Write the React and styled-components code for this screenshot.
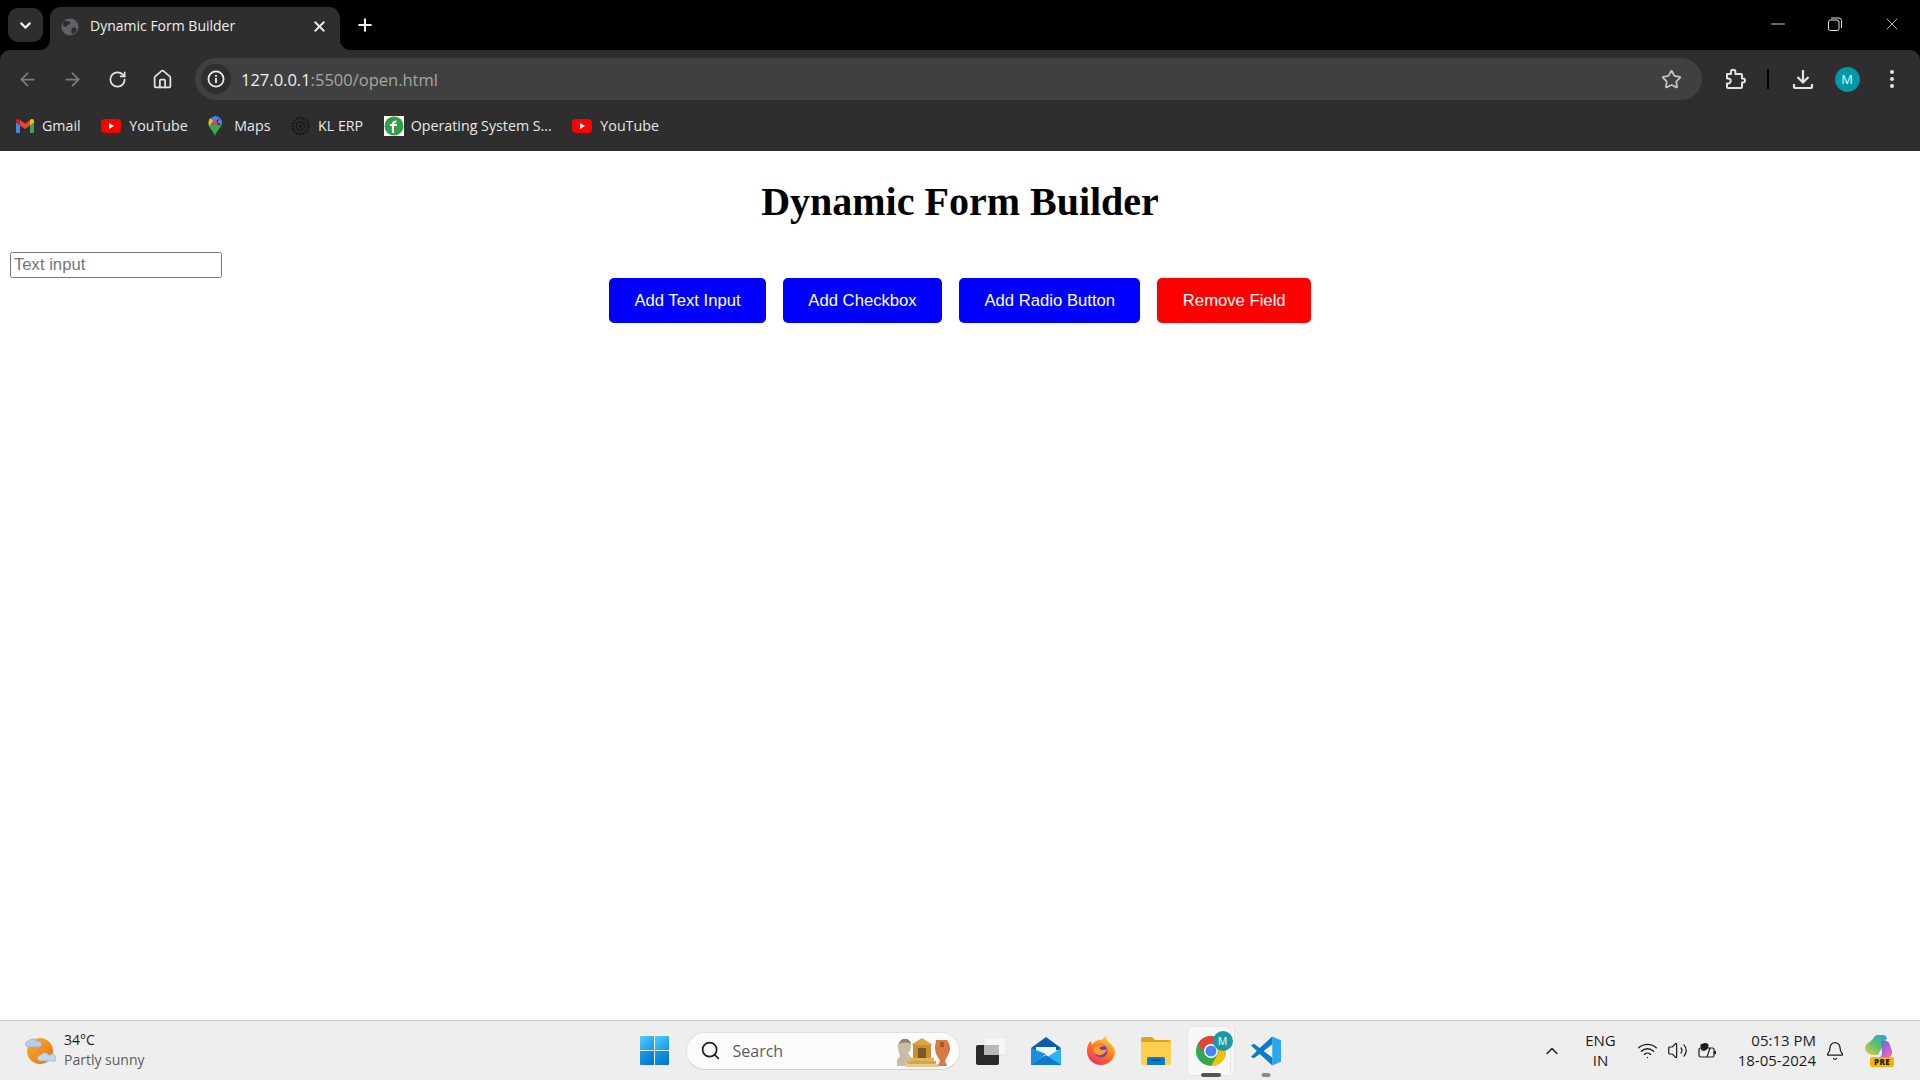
import React from "react";
import styled, { createGlobalStyle } from "styled-components";
import {
  ArrowLeft,
  ArrowRight,
  RotateCw,
  House,
  Star,
  X,
  Plus,
  ChevronDown,
  ChevronUp,
  Minus,
  Wifi,
  Volume2,
  Bell,
  Search,
} from "lucide-react";

const GlobalStyle = createGlobalStyle`
  html, body {
    margin: 0;
    padding: 0;
    background: #ffffff;
  }
  * {
    box-sizing: border-box;
  }
`;

const uiFont = `"Open Sans", "Noto Sans", sans-serif`;

const Screen = styled.div`
  width: 1920px;
  height: 1080px;
  display: flex;
  flex-direction: column;
  overflow: hidden;
  background: #000;
`;

/* tab strip */
const TabStrip = styled.div`
  height: 50px;
  flex: none;
  display: flex;
  align-items: flex-end;
  padding-left: 8px;
  background: #000;
  position: relative;
`;

const TabSearch = styled.div`
  width: 35px;
  height: 34px;
  margin-bottom: 8px;
  border-radius: 10px;
  background: #2e2e2e;
  color: #f0f0f0;
  display: flex;
  align-items: center;
  justify-content: center;
`;

const Tab = styled.div`
  width: 290px;
  height: 43px;
  margin-left: 7px;
  padding: 0 12px 0 11px;
  background: #2e2e2e;
  border-radius: 11px 11px 0 0;
  display: flex;
  align-items: center;
  position: relative;
  color: #eeeeee;
  font: 14px ${uiFont};

  &::before,
  &::after {
    content: "";
    position: absolute;
    bottom: 0;
    width: 11px;
    height: 11px;
  }
  &::before {
    left: -11px;
    background: radial-gradient(circle at 0 0, transparent 11px, #2e2e2e 11.5px);
  }
  &::after {
    right: -11px;
    background: radial-gradient(circle at 100% 0, transparent 11px, #2e2e2e 11.5px);
  }
`;

const TabTitle = styled.span`
  margin-left: 11px;
  flex: 1;
  position: relative;
  top: -3px;
`;

const TabGlyph = styled.span`
  display: flex;
  position: relative;
  top: -2px;
`;

const NewTab = styled.div`
  width: 30px;
  margin-left: 10px;
  margin-bottom: 10px;
  height: 30px;
  color: #f2f2f2;
  display: flex;
  align-items: center;
  justify-content: center;
`;

const WindowControls = styled.div`
  margin-left: auto;
  align-self: flex-start;
  display: flex;
  height: 48px;
  align-items: center;
  color: #e6e6e6;
`;

const WindowButton = styled.div`
  width: 57px;
  display: flex;
  justify-content: center;
  align-items: center;
`;

/* toolbar */
const Toolbar = styled.div`
  height: 56px;
  flex: none;
  background: #2e2e2e;
  border-radius: 10px 10px 0 0;
  display: flex;
  align-items: center;
  padding: 2px 10px 0 9px;
`;

const NavButton = styled.div`
  width: 36px;
  margin-right: ${(p) => p.$gap || 0}px;
  display: flex;
  justify-content: center;
  align-items: center;
  color: ${(p) => (p.$dim ? "#7d7d7d" : "#e3e3e3")};
`;

const Omnibox = styled.div`
  flex: 1;
  height: 42px;
  margin-left: 15px;
  margin-right: 15px;
  border-radius: 21px;
  background: #404040;
  display: flex;
  align-items: center;
  padding: 0 20px 0 6px;
`;

const InfoChip = styled.div`
  width: 30px;
  height: 30px;
  border-radius: 50%;
  background: #2e2e2e;
  display: flex;
  align-items: center;
  justify-content: center;
  flex: none;
`;

const Url = styled.div`
  margin-left: 10px;
  flex: 1;
  font: 16.5px ${uiFont};
  color: #a6a6a6;

  b {
    font-weight: 400;
    color: #f0f0f0;
  }
`;

const Separator = styled.div`
  width: 2px;
  height: 20px;
  margin: 0 16px 0 14px;
  background: #000;
`;

const Avatar = styled.div`
  width: 25px;
  height: 25px;
  border-radius: 50%;
  background: #0097a7;
  color: #e8f7f8;
  font: 13px ${uiFont};
  display: flex;
  align-items: center;
  justify-content: center;
`;

const BookmarkBar = styled.div`
  height: 45px;
  flex: none;
  background: #2e2e2e;
  display: flex;
  align-items: center;
  padding: 0 0 6px 16px;
  gap: 20.5px;
`;

const Bookmark = styled.div`
  display: flex;
  align-items: center;
  gap: ${(p) => p.$gap || 8}px;
  font: 14.25px ${uiFont};
  color: #e8e8e8;
  white-space: nowrap;
`;

/* page content */
const Page = styled.main`
  flex: 1;
  background: #ffffff;
  padding: 28px 10px 0;
`;

const Heading = styled.h1`
  margin: 0;
  text-align: center;
  font: bold 40px/46px "Liberation Serif", "Times New Roman", serif;
  color: #000;
`;

const TextInput = styled.input`
  display: block;
  width: 212px;
  height: 26px;
  margin-top: 27px;
  padding: 1px 3px;
  border: 1.25px solid #767676;
  border-radius: 2.5px;
  font: 16.67px "Liberation Sans", Arial, sans-serif;
  background: #fff;

  &::placeholder {
    color: #757575;
  }
`;

const ButtonRow = styled.div`
  display: flex;
  justify-content: center;
  gap: 17px;
`;

const ActionButton = styled.button`
  height: 45px;
  padding: 0 25.4px;
  border: none;
  border-radius: 5px;
  color: #fff;
  background: ${(p) => (p.$danger ? "#ff0000" : "#0000ff")};
  font: 16.67px "Liberation Sans", Arial, sans-serif;
`;

/* taskbar */
const Taskbar = styled.footer`
  height: 60px;
  flex: none;
  background: #eeeeee;
  border-top: 1px solid #c6c6c6;
  display: grid;
  grid-template-columns: 1fr auto 1fr;
  align-items: center;
`;

const Weather = styled.div`
  display: flex;
  align-items: center;
  padding-left: 24px;
  gap: 8px;
`;

const WeatherText = styled.div`
  font: 14px/20px ${uiFont};
  color: #1a1a1a;
  padding-bottom: 2px;

  span {
    display: block;
    color: #5c5c5c;
  }
`;

const TaskCenter = styled.div`
  display: flex;
  align-items: center;
  width: 643px;
  padding-left: 1px;
`;

const SearchBox = styled.div`
  width: 274px;
  height: 38px;
  margin-left: 17px;
  border-radius: 19px;
  background: #fbfbfb;
  border: 1px solid #e2e2e2;
  border-bottom-color: #cfcfcf;
  display: flex;
  align-items: center;
  padding-left: 13px;
  color: #5c5c5c;
  font: 16px ${uiFont};
  position: relative;
`;

const SearchLabel = styled.span`
  margin-left: 12px;
`;

const SearchArt = styled.svg`
  position: absolute;
  right: 6px;
  top: 3px;
`;

const TaskIcon = styled.div`
  width: 30px;
  height: 30px;
  margin-left: ${(p) => p.$left || 25}px;
  display: flex;
  align-items: center;
  justify-content: center;
  position: relative;
  flex: none;
  isolation: isolate;
`;

const ActiveTile = styled.div`
  position: absolute;
  z-index: -1;
  left: -9px;
  top: -10px;
  width: 44px;
  height: 50px;
  border-radius: 5px;
  background: #f8f8f8;
  border: 1px solid #e4e4e4;
  box-shadow: 4px 0 0 -1px #f6f6f6, 5px 0 0 -1px #e4e4e4;
`;

const Indicator = styled.div`
  position: absolute;
  left: 50%;
  transform: translateX(-50%);
  bottom: -11px;
  height: 4px;
  border-radius: 2px;
  width: ${(p) => p.$w}px;
  background: ${(p) => p.$color};
`;

const ProfileBadge = styled.div`
  position: absolute;
  right: -7px;
  top: -5px;
  width: 20px;
  height: 20px;
  border-radius: 50%;
  background: #1a9aa5;
  color: #cdeef0;
  font: 600 10.5px ${uiFont};
  display: flex;
  align-items: center;
  justify-content: center;
`;

const Tray = styled.div`
  display: flex;
  align-items: center;
  justify-content: flex-end;
  color: #1c1c1c;
  padding-right: 25px;
`;

const TrayIcon = styled.div`
  width: ${(p) => p.$w || 30}px;
  display: flex;
  justify-content: center;
  align-items: center;
  margin-left: ${(p) => p.$left || 0}px;
`;

const TrayText = styled.div`
  font: 15px/20px ${uiFont};
  text-align: ${(p) => p.$align};
  margin-left: ${(p) => p.$left || 0}px;
  padding-bottom: 2px;
  white-space: nowrap;
`;

const Copilot = styled.div`
  width: 30px;
  height: 32px;
  margin-left: 20px;
  position: relative;
`;

const PreBadge = styled.div`
  position: absolute;
  left: 5px;
  bottom: 0;
  width: 24px;
  height: 10px;
  border-radius: 2px;
  background: #f7b500;
  color: #222;
  font: 800 8px/10px ${uiFont};
  text-align: center;
  letter-spacing: 0.4px;
`;

const GlobeIcon = () => (
  <svg width="18" height="18" viewBox="0 0 18 18">
    <circle cx="9" cy="9" r="8.5" fill="#5f6368" />
    <path d="M4 3c2 0 4 0 5 1s-1 3-2 3-1 2-3 2-2-2-2-3 1-3 2-3zM11 10c2-1 4 0 5 1-1 3-3 5-5 5-1-2-1-4 0-6z" fill="#2e2e2e" />
  </svg>
);

const InfoIcon = () => (
  <svg width="18" height="18" viewBox="0 0 18 18" fill="none">
    <circle cx="9" cy="9" r="7.6" stroke="#f0f0f0" strokeWidth="1.7" />
    <rect x="8.1" y="8" width="1.8" height="5" fill="#f0f0f0" />
    <rect x="8.1" y="4.9" width="1.8" height="1.9" fill="#f0f0f0" />
  </svg>
);

const PuzzleIcon = () => (
  <svg width="22" height="22" viewBox="0 0 22 22" fill="none" stroke="#e3e3e3" strokeWidth="2" strokeLinejoin="round">
    <path d="M3 6h4V4a2.2 2.2 0 0 1 4.4 0v2H17a1 1 0 0 1 1 1v3.5h1a2 2 0 0 1 0 4h-1V19a1 1 0 0 1-1 1H4a1 1 0 0 1-1-1v-3.5h1.2a2.5 2.5 0 0 0 0-5H3z" />
  </svg>
);

const DownloadIcon = () => (
  <svg width="22" height="22" viewBox="0 0 22 22" fill="none" stroke="#e3e3e3" strokeWidth="2.2">
    <path d="M11 2v12M5.5 9l5.5 5.5L16.5 9" />
    <path d="M2 16v2.5a1.5 1.5 0 0 0 1.5 1.5h15a1.5 1.5 0 0 0 1.5-1.5V16" />
  </svg>
);

const DotsIcon = () => (
  <svg width="6" height="20" viewBox="0 0 6 20" fill="#e3e3e3">
    <circle cx="3" cy="3" r="2" />
    <circle cx="3" cy="10" r="2" />
    <circle cx="3" cy="17" r="2" />
  </svg>
);

const RestoreIcon = () => (
  <svg width="14" height="14" viewBox="0 0 14 14" fill="none" stroke="#e6e6e6" strokeWidth="1">
    <rect x="0.5" y="3" width="10.5" height="10.5" rx="2" />
    <path d="M3 1h8a2.5 2.5 0 0 1 2.5 2.5V11" />
  </svg>
);

const GmailIcon = () => (
  <svg width="18" height="14" viewBox="0 0 18 14">
    <path d="M0 3v9.8C0 13.5.5 14 1.2 14H4V6z" fill="#4285f4" />
    <path d="M18 3v9.8c0 .7-.5 1.2-1.2 1.2H14V6z" fill="#34a853" />
    <path d="M4 6.5 9 10l5-3.500V1L9 4.700 4 1z" fill="#ea4335" />
    <path d="M14 1v5.500L18 3.500V2c0-1.600-1.800-2.500-3-1.700z" fill="#fbbc04" />
    <path d="M4 1v5.500L0 3.500V2C0 .4 1.800-.5 3 .3z" fill="#c5221f" />
  </svg>
);

const YoutubeIcon = () => (
  <svg width="20" height="14" viewBox="0 0 20 14">
    <rect width="20" height="14" rx="4" fill="#ff0000" />
    <path d="M8 4l5 3-5 3z" fill="#fff" />
  </svg>
);

const MapsIcon = () => (
  <svg width="14" height="20" viewBox="0 0 14 20">
    <path d="M7 0a7 7 0 0 1 5 2L2 9.500A7 7 0 0 1 7 0z" fill="#4285f4" />
    <path d="M12 2a7 7 0 0 1 1.400 7.500L9.500 6z" fill="#4285f4" />
    <path d="M.6 9.500C1.500 12 5.500 15.500 7 20c1.500-4.500 5.500-8 6.400-10.500L9.400 8.500 5 8z" fill="#34a853" />
    <path d="M2.100 2.100 5 5 1 10.300C.3 8 0 5 2.100 2.100z" fill="#fbbc04" />
    <circle cx="7" cy="7" r="2.500" fill="#ea4335" />
  </svg>
);

const ErpIcon = () => (
  <svg width="19" height="20" viewBox="0 0 19 20" fill="none">
    <circle cx="9.500" cy="10" r="8" stroke="#161616" strokeWidth="2.500" strokeDasharray="1.800 1.200" />
    <circle cx="9.500" cy="10" r="5" fill="#1c1c1c" />
    <circle cx="9.500" cy="10" r="2.500" stroke="#3a3a3a" />
  </svg>
);

const OsIcon = () => (
  <svg width="20" height="20" viewBox="0 0 20 20">
    <rect width="20" height="20" fill="#ffffff" />
    <circle cx="10" cy="10" r="9.500" fill="#2f9e44" />
    <path d="M9 17V8.500c0-2 1-3 3.500-3M6 9h7" stroke="#fff" strokeWidth="2.200" fill="none" />
  </svg>
);

const WeatherIcon = () => (
  <svg width="32" height="30" viewBox="0 0 32 30">
    <defs>
      <linearGradient id="sun" x1="0" y1="0" x2="1" y2="1">
        <stop offset="0" stopColor="#f9b72a" />
        <stop offset="1" stopColor="#ea6a12" />
      </linearGradient>
    </defs>
    <circle cx="16" cy="15" r="13" fill="url(#sun)" />
    <path d="M4 11a3 3 0 0 1 1-6 4.500 4.500 0 0 1 8 .5 3 3 0 0 1 3 5.500z" fill="#b7cdec" stroke="#8fb0de" strokeWidth="0.700" />
    <path d="M16 25a3 3 0 0 1 1-6 4.500 4.500 0 0 1 8 .5 3 3 0 0 1 6 5.500z" fill="#c3d6f0" stroke="#8fb0de" strokeWidth="0.700" />
  </svg>
);

const WindowsLogo = () => (
  <svg width="29" height="29" viewBox="0 0 29 29">
    <defs>
      <linearGradient id="winTop" x1="0" y1="0" x2="1" y2="1">
        <stop offset="0" stopColor="#4fd0fb" />
        <stop offset="1" stopColor="#1495e4" />
      </linearGradient>
      <linearGradient id="winBottom" x1="0" y1="0" x2="1" y2="1">
        <stop offset="0" stopColor="#1aa0ea" />
        <stop offset="1" stopColor="#0070cc" />
      </linearGradient>
    </defs>
    <path d="M1 0h13v14H0V1a1 1 0 0 1 1-1z" fill="url(#winTop)" />
    <path d="M15 0h13a1 1 0 0 1 1 1v13H15z" fill="url(#winTop)" />
    <path d="M0 15h14v14H1a1 1 0 0 1-1-1z" fill="url(#winBottom)" />
    <path d="M15 15h14v13a1 1 0 0 1-1 1H15z" fill="url(#winBottom)" />
  </svg>
);

const MuseumArt = () => (
  <SearchArt width="58" height="32" viewBox="0 0 58 32">
    <path d="M3 10c0-4 3-7 7-7s6 3 6 7c0 3-1 6-3 7l3 4v9H2v-6l3-4c-1-3-2-6-2-10z" fill="#c9bda6" />
    <path d="M4 8c1-4 4-6 7-5 2 0 5 2 5 5-3-2-8-2-12 0z" fill="#8c8573" />
    <path d="M27 2 38 9H16z" fill="#d9a441" />
    <rect x="18" y="9" width="18" height="13" fill="#c98f32" />
    <rect x="23" y="12" width="8" height="10" fill="#7a5a24" />
    <rect x="15" y="22" width="24" height="3" fill="#e0b45a" />
    <rect x="13" y="25" width="28" height="3" fill="#d6a64a" />
    <rect x="11" y="28" width="33" height="3" fill="#e8c98a" />
    <path d="M41 4h11c1 2 3 4 3 8 0 6-4 10-5 13l2 5H43l2-5c-1-3-5-7-5-13 0-4 1-6 1-8z" fill="#d87a45" />
    <path d="M45 6h4v5h-4z" fill="#a85a2c" />
  </SearchArt>
);

const TaskViewIcon = () => (
  <svg width="30" height="28" viewBox="0 0 30 28">
    <rect x="8" y="0" width="22" height="18" rx="1.500" fill="#f7f7f7" stroke="#e2e2e2" />
    <rect x="0" y="8" width="23" height="20" rx="2" fill="#2a2a2a" />
    <rect x="8" y="8" width="15" height="10" fill="#b9b9b9" />
  </svg>
);

const MailIcon = () => (
  <svg width="30" height="28" viewBox="0 0 30 28">
    <path d="M0 11 15 0l15 11v2H0z" fill="#0a5fa8" />
    <path d="M5 10h20v5l-10 5-10-5z" fill="#f4f4f4" />
    <path d="M0 11l15 10 15-10v17H0z" fill="#29b6f0" />
    <path d="M0 28 15 17 0 11z" fill="#1a8fdc" />
    <path d="M0 28h30L15 18z" fill="#0f78cf" />
  </svg>
);

const FirefoxIcon = () => (
  <svg width="30" height="30" viewBox="0 0 30 30">
    <defs>
      <linearGradient id="fox" x1="0.800" y1="0" x2="0.200" y2="1">
        <stop offset="0" stopColor="#ffd43a" />
        <stop offset="0.500" stopColor="#ff7a1a" />
        <stop offset="1" stopColor="#f0266a" />
      </linearGradient>
    </defs>
    <path d="M15 29A14 14 0 0 1 1 15C1 10 3 6 5 5l1 4c2-3 6-6 10-5 1-1 2-3 4-4 0 3 1 5 4 7 3 3 5 6 5 9a14 14 0 0 1-14 13z" fill="url(#fox)" />
    <circle cx="15" cy="15" r="6.500" fill="#6b3fc4" />
    <path d="M8 12c3-3 8-4 11-2-3 0-5 1-6 2 2 3 6 2 8 1-1 4-5 7-9 6-3-1-5-4-4-7z" fill="#ff9f2e" />
  </svg>
);

const FolderIcon = () => (
  <svg width="30" height="28" viewBox="0 0 30 28">
    <path d="M0 2a2 2 0 0 1 2-2h9l3 3h14a2 2 0 0 1 2 2v4H0z" fill="#e0a416" />
    <path d="M0 5h30v21a2 2 0 0 1-2 2H2a2 2 0 0 1-2-2z" fill="#fcd04f" />
    <path d="M6 22a2 2 0 0 1 2-2h14a2 2 0 0 1 2 2v6H6z" fill="#0f78cf" />
    <rect x="10" y="22.500" width="10" height="1.500" fill="#0a4f8f" />
  </svg>
);

const ChromeIcon = () => (
  <svg width="30" height="30" viewBox="0 0 30 30">
    <circle cx="15" cy="15" r="15" fill="#34a853" />
    <path d="M15 0a15 15 0 0 1 13 7.500H15a7.500 7.500 0 0 0-6.500 11.250L2 7.500A15 15 0 0 1 15 0z" fill="#ea4335" />
    <path d="M28 7.500A15 15 0 0 1 15 30l6.500-11.250A7.500 7.500 0 0 0 15 7.500z" fill="#fbbc04" />
    <circle cx="15" cy="15" r="7" fill="#fff" />
    <circle cx="15" cy="15" r="5.500" fill="#4285f4" />
  </svg>
);

const VscodeIcon = () => (
  <svg width="31" height="30" viewBox="0 0 31 30">
    <path d="M22 0 31 4v22l-9 4z" fill="#29a8ee" />
    <path d="M22 0 9 12 3 7.500 0 9l6 6-6 6 3 1.500L9 18l13 12z M22 8v14l-9-7z" fill="#0e7ac8" fillRule="evenodd" />
  </svg>
);

const BatteryIcon = () => (
  <svg width="20" height="18" viewBox="0 0 20 18" fill="none" stroke="#1c1c1c" strokeWidth="1.200">
    <rect x="1" y="6" width="15" height="9" rx="1.500" />
    <path d="M17 9v3" strokeWidth="2" />
    <path d="M3 3c3-2 6-2 7 0 0 4-3 6-6 5-1-1-1-3-1-5z" fill="#1c1c1c" />
    <path d="M9 15l3-9" />
  </svg>
);

const CopilotIcon = () => (
  <svg width="28" height="26" viewBox="0 0 28 26">
    <defs>
      <linearGradient id="copA" x1="0" y1="1" x2="1" y2="0">
        <stop offset="0" stopColor="#f6c945" />
        <stop offset="0.500" stopColor="#53c46c" />
        <stop offset="1" stopColor="#2b9de8" />
      </linearGradient>
      <linearGradient id="copB" x1="0" y1="0" x2="1" y2="1">
        <stop offset="0" stopColor="#2a7de1" />
        <stop offset="0.500" stopColor="#b25fd6" />
        <stop offset="1" stopColor="#f27aa6" />
      </linearGradient>
    </defs>
    <path d="M8 4c1-2 2-4 5-4h5c2 0 3 1 4 3l-5 9-4 8H8c-4 0-8-3-8-7 0-2 1-3 2-4z" fill="url(#copA)" />
    <path d="M16 6h5c2 0 3 1 4 4l2 6c1 4-2 7-6 7h-9c2 0 4-1 5-4z" fill="url(#copB)" />
  </svg>
);

const bookmarks = [
  { label: "Gmail", icon: <GmailIcon /> },
  { label: "YouTube", icon: <YoutubeIcon /> },
  { label: "Maps", icon: <MapsIcon />, gap: 12 },
  { label: "KL ERP", icon: <ErpIcon /> },
  { label: "Operating System S...", icon: <OsIcon />, gap: 7 },
  { label: "YouTube", icon: <YoutubeIcon /> },
];

const buttons = [
  { label: "Add Text Input" },
  { label: "Add Checkbox" },
  { label: "Add Radio Button" },
  { label: "Remove Field", danger: true },
];

const App = () => {
  return (
    <Screen>
      <GlobalStyle />
      <TabStrip>
        <TabSearch>
          <ChevronDown size={17} strokeWidth={3} />
        </TabSearch>
        <Tab>
          <TabGlyph>
            <GlobeIcon />
          </TabGlyph>
          <TabTitle>Dynamic Form Builder</TabTitle>
          <TabGlyph>
            <X size={17} strokeWidth={2.5} />
          </TabGlyph>
        </Tab>
        <NewTab>
          <Plus size={20} strokeWidth={2.5} />
        </NewTab>
        <WindowControls>
          <WindowButton>
            <Minus size={22} strokeWidth={1} />
          </WindowButton>
          <WindowButton>
            <RestoreIcon />
          </WindowButton>
          <WindowButton>
            <X size={20} strokeWidth={1} />
          </WindowButton>
        </WindowControls>
      </TabStrip>

      <Toolbar>
        <NavButton $dim $gap={9}>
          <ArrowLeft size={21} strokeWidth={2} />
        </NavButton>
        <NavButton $dim $gap={9}>
          <ArrowRight size={21} strokeWidth={2} />
        </NavButton>
        <NavButton $gap={9}>
          <RotateCw size={19} strokeWidth={2.2} />
        </NavButton>
        <NavButton>
          <House size={21} strokeWidth={2} />
        </NavButton>
        <Omnibox>
          <InfoChip>
            <InfoIcon />
          </InfoChip>
          <Url>
            <b>127.0.0.1</b>:5500/open.html
          </Url>
          <Star size={21} strokeWidth={2} color="#c4c4c4" />
        </Omnibox>
        <NavButton>
          <PuzzleIcon />
        </NavButton>
        <Separator />
        <NavButton $gap={8}>
          <DownloadIcon />
        </NavButton>
        <NavButton $gap={9}>
          <Avatar>M</Avatar>
        </NavButton>
        <NavButton>
          <DotsIcon />
        </NavButton>
      </Toolbar>

      <BookmarkBar>
        {bookmarks.map((b, i) => (
          <Bookmark key={i} $gap={b.gap}>
            {b.icon}
            {b.label}
          </Bookmark>
        ))}
      </BookmarkBar>

      <Page>
        <Heading>Dynamic Form Builder</Heading>
        <TextInput type="text" placeholder="Text input" />
        <ButtonRow>
          {buttons.map((b) => (
            <ActionButton key={b.label} $danger={b.danger}>
              {b.label}
            </ActionButton>
          ))}
        </ButtonRow>
      </Page>

      <Taskbar>
        <Weather>
          <WeatherIcon />
          <WeatherText>
            34°C
            <span>Partly sunny</span>
          </WeatherText>
        </Weather>
        <TaskCenter>
          <WindowsLogo />
          <SearchBox>
            <Search size={21} strokeWidth={2} color="#222" />
            <SearchLabel>Search</SearchLabel>
            <MuseumArt />
          </SearchBox>
          <TaskIcon $left={16}>
            <TaskViewIcon />
          </TaskIcon>
          <TaskIcon>
            <MailIcon />
          </TaskIcon>
          <TaskIcon>
            <FirefoxIcon />
          </TaskIcon>
          <TaskIcon>
            <FolderIcon />
          </TaskIcon>
          <TaskIcon>
            <ActiveTile />
            <ChromeIcon />
            <ProfileBadge>M</ProfileBadge>
            <Indicator $w={20} $color="#555555" />
          </TaskIcon>
          <TaskIcon>
            <VscodeIcon />
            <Indicator $w={9} $color="#8a8a8a" />
          </TaskIcon>
        </TaskCenter>
        <Tray>
          <TrayIcon $w={20}>
            <ChevronUp size={22} strokeWidth={1.8} />
          </TrayIcon>
          <TrayText $align="center" $left={23}>
            ENG
            <br />
            IN
          </TrayText>
          <TrayIcon $left={17}>
            <Wifi size={21} strokeWidth={1.6} />
          </TrayIcon>
          <TrayIcon>
            <Volume2 size={21} strokeWidth={1.4} />
          </TrayIcon>
          <TrayIcon>
            <BatteryIcon />
          </TrayIcon>
          <TrayText $align="right" $left={15}>
            05:13 PM
            <br />
            18-05-2024
          </TrayText>
          <TrayIcon $w={20} $left={9}>
            <Bell size={20} strokeWidth={1.5} />
          </TrayIcon>
          <Copilot>
            <CopilotIcon />
            <PreBadge>PRE</PreBadge>
          </Copilot>
        </Tray>
      </Taskbar>
    </Screen>
  );
};

export default App;
